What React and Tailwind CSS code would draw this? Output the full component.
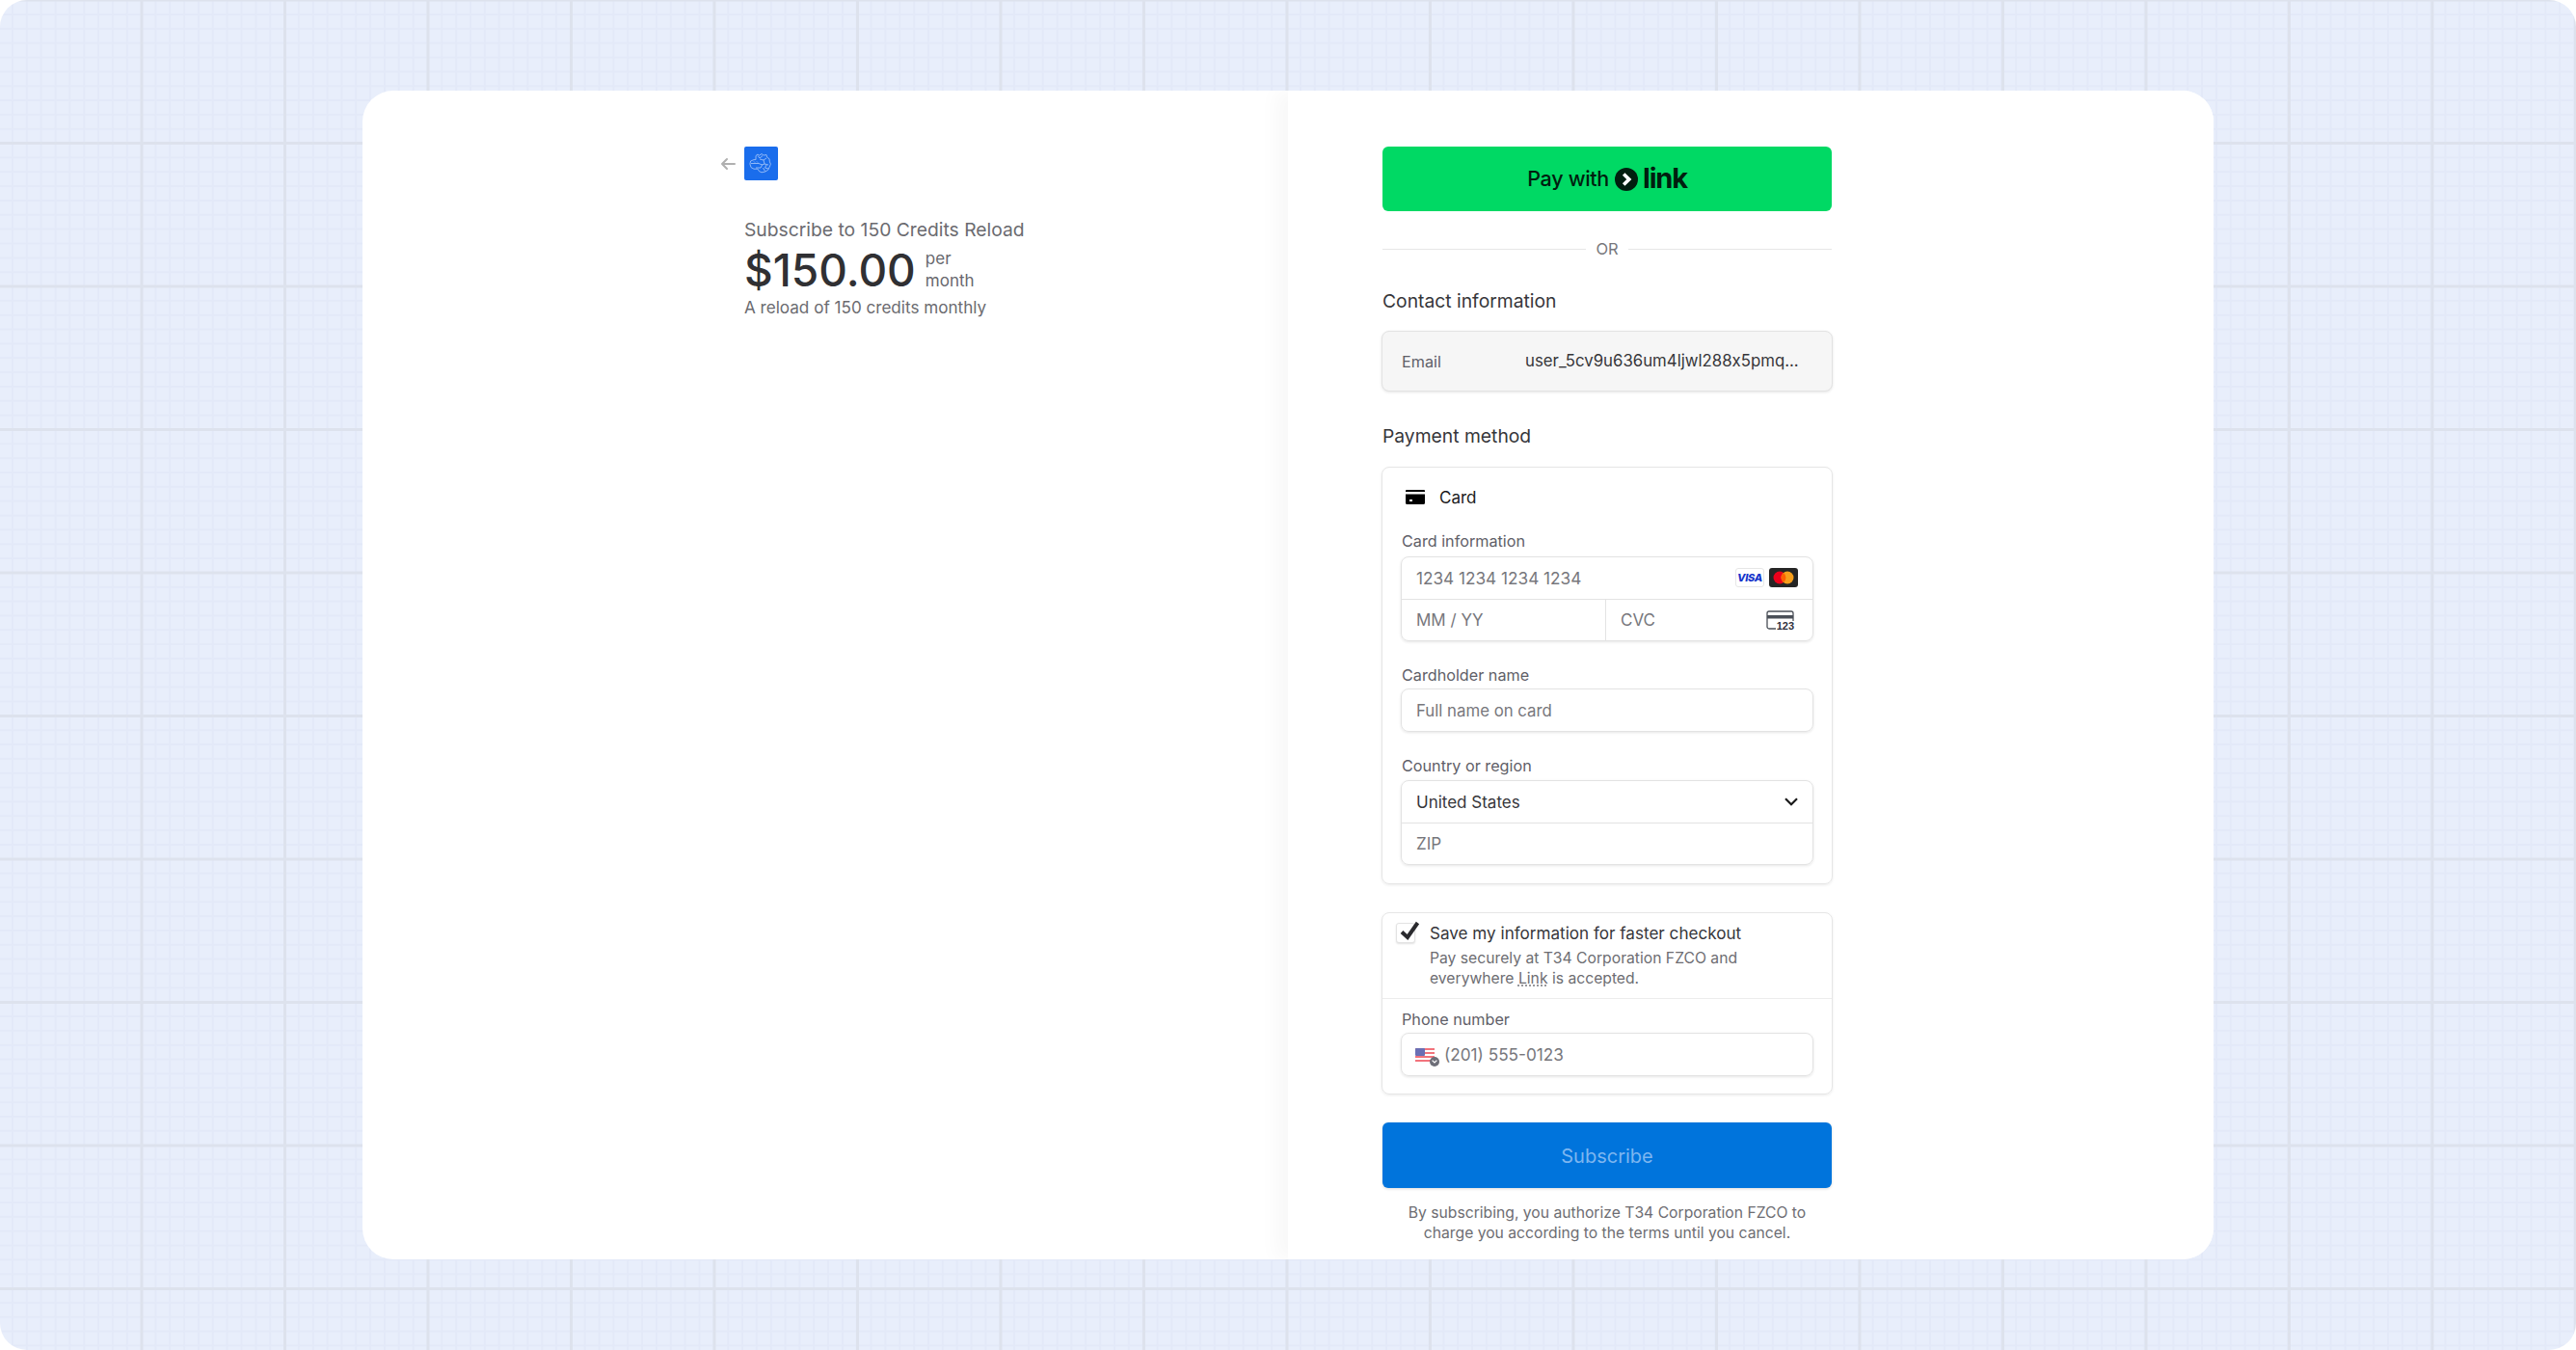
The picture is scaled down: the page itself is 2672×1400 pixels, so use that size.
import React from 'react';

function BackArrow() {
  return (
    <svg width="16" height="14" viewBox="0 0 16 14" fill="none" stroke="#b0b0b0" strokeWidth="2" strokeLinecap="round" strokeLinejoin="round">
      <path d="M15 7H2M7 2 2 7l5 5" />
    </svg>
  );
}

function Logo() {
  return (
    <div className="w-[35px] h-[35px] rounded-[2px] bg-[#1a6dec] flex items-center justify-center">
      <svg width="25" height="25" viewBox="0 0 25 25" fill="none" stroke="#9dbff7" strokeWidth="0.9" strokeLinejoin="round">
        <path d="M7 4.5 9 3l1.5 1.2L13 2.5l2 1.6 3-.6.6 2.6 2.4 1.6.4 3.2 1 2.2-1.2 3-1.4 3-3 1.9-3.8.8-2.6-1.2-1.4-2.4H5l-3-1.6L.9 13l.7-3 3.4-1.4L7 8.6z" />
        <path d="M2 12.5h8l3.5 1.5-1.5 3H7M11 8l4 1 3-2M15 9l1 4 4 1M16 13l-3 1M14.5 17l2 3.5M18 14l-1.5 3 3.5 1M9 4.5 11 7l3-2.5M5 10.5l1 1M8 10.5l1 1" />
      </svg>
    </div>
  );
}

function LinkMark() {
  return (
    <svg width="24" height="24" viewBox="0 0 24 24">
      <circle cx="12" cy="12" r="12" fill="#011e0f" />
      <path d="M9.2 6.5 14.8 12l-5.6 5.5" fill="none" stroke="#ffffff" strokeWidth="3.6" />
    </svg>
  );
}

function CardIcon() {
  return (
    <svg width="20" height="15" viewBox="0 0 20 15">
      <path d="M0 1.2C0 .5.5 0 1.2 0h17.6c.7 0 1.2.5 1.2 1.2V2H0zM0 4.5h20v9.3c0 .7-.5 1.2-1.2 1.2H1.2C.5 15 0 14.500 0 13.800z" fill="#000000" />
      <rect x="4" y="10" width="3" height="2" fill="#ffffff" />
    </svg>
  );
}

function Visa() {
  return (
    <div className="w-[30px] h-[20px] rounded-[3px] border border-[#e6e6e6] bg-white flex items-center justify-center">
      <span className="text-[11px] leading-none font-extrabold italic tracking-[-0.3px] text-[#1434cb]">VISA</span>
    </div>
  );
}

function Mastercard() {
  return (
    <div className="w-[30px] h-[20px] rounded-[3px] bg-[#252525] flex items-center justify-center">
      <svg width="22" height="14" viewBox="0 0 22 14">
        <circle cx="7" cy="7" r="6.5" fill="#eb001b" />
        <circle cx="15" cy="7" r="6.5" fill="#f79e1b" />
        <path d="M11 1.900a6.500 6.500 0 0 1 0 10.200 6.500 6.500 0 0 1 0-10.200z" fill="#ff5f00" />
      </svg>
    </div>
  );
}

function CvcIcon() {
  return (
    <div className="relative w-[29px] h-[20px]">
      <svg width="29" height="20" viewBox="0 0 29 20" fill="none">
        <path d="M15 19H3a2 2 0 0 1-2-2V3a2 2 0 0 1 2-2h23a2 2 0 0 1 2 2v9" stroke="#4a4f57" strokeWidth="1.300" />
        <rect x="1" y="5" width="27" height="3.500" fill="#4a4f57" />
      </svg>
      <span className="absolute right-0 bottom-[-2px] bg-white pl-px text-[11px] leading-none font-bold text-[#30313d] font-['Liberation_Sans',sans-serif]">123</span>
    </div>
  );
}

function Chevron() {
  return (
    <svg width="14" height="9" viewBox="0 0 14 9" fill="none" stroke="#1a1a1a" strokeWidth="2.200">
      <path d="M1 1.200 7 7.200l6-6" />
    </svg>
  );
}

function Flag() {
  return (
    <div className="relative w-[20px] h-[14px]">
      <svg width="20" height="14" viewBox="0 0 20 14">
        <rect width="20" height="14" rx="1.500" fill="#ffffff" />
        <path d="M0 1h20M0 5h20M0 9h20M0 13h20" stroke="#f2737c" strokeWidth="2" />
        <rect width="10" height="8" rx="1" fill="#6a6fb4" />
      </svg>
      <div className="absolute right-[-5px] bottom-[-5px] w-[10px] h-[10px] rounded-full bg-[#6d6e78] flex items-center justify-center">
        <svg width="6" height="4" viewBox="0 0 6 4" fill="none" stroke="#ffffff" strokeWidth="1.200">
          <path d="M.6.600 3 3 5.400.600" />
        </svg>
      </div>
    </div>
  );
}

function FieldLabel({ children }) {
  return <div className="h-[20px] leading-[20px] pt-px text-[16.200px] font-normal text-[#5f6068] ml-px">{children}</div>;
}

export default function App() {
  return (
    <div className="w-[2672px] h-[1400px] rounded-[28px] overflow-hidden flex items-center justify-center font-['Inter',sans-serif] bg-[#e8eefb] bg-[linear-gradient(to_right,#dde2ed_3px,transparent_3px),linear-gradient(to_bottom,#dde2ed_3px,transparent_3px),linear-gradient(to_right,#e3e9f8_2px,transparent_2px),linear-gradient(to_bottom,#e3e9f8_2px,transparent_2px)] bg-[size:148.5px_148.5px,148.5px_148.5px,14.85px_14.85px,14.85px_14.85px] bg-[position:145.5px_0,0_147px,12px_0,0_14px]">
      <div className="w-[1920px] h-[1212px] bg-white rounded-[32px] flex overflow-hidden">
        {/* Left: product summary */}
        <div className="w-[960px] shrink-0 pl-[371px] pt-[58px]">
          <div className="flex items-center gap-[9px] h-[35px]">
            <BackArrow />
            <Logo />
          </div>
          <div className="ml-[25px] mt-[37px]">
            <div className="h-[28px] leading-[28px] text-[19.300px] font-normal text-[#6b6b70]">Subscribe to 150 Credits Reload</div>
            <div className="flex items-center gap-[10px] h-[56px]">
              <span className="text-[46px] leading-none font-medium text-[#303033]">$150.00</span>
              <span className="text-[17px] leading-[23px] font-normal text-[#68686e]">per<br />month</span>
            </div>
            <div className="h-[24px] leading-[24px] text-[17.100px] font-normal text-[#6b6b70] -mt-[1px]">A reload of 150 credits monthly</div>
          </div>
        </div>

        {/* Right: checkout form */}
        <div className="relative w-[960px] shrink-0 pl-[97px] pt-[58px] bg-white shadow-[-12px_0_20px_rgba(0,0,0,0.03)]">
          <div className="w-[468px]">
            <div className="mx-px h-[67px] rounded-[6px] bg-[#00d964] flex items-center justify-center text-[#011e0f]">
              <span className="text-[21.500px] mr-[6px] font-medium tracking-[-0.3px]">Pay with</span>
              <LinkMark />
              <span className="text-[29px] font-bold leading-none tracking-[-1.200px] ml-[5px] pb-[3px]">link</span>
            </div>

            <div className="mx-px mt-[28px] h-[22px] flex items-center gap-[10px]">
              <div className="flex-1 h-px bg-[#e6e6e6]" />
              <span className="pt-px text-[16.500px] text-[#77777c]">OR</span>
              <div className="flex-1 h-px bg-[#e6e6e6]" />
            </div>

            <div className="mt-[29px] ml-px h-[28px] leading-[28px] text-[19.300px] font-normal text-[#36363a]">Contact information</div>
            <div className="mt-[17px] h-[63px] rounded-[8px] border border-[#e3e3e3] bg-[#f6f6f6] shadow-[0_1px_3px_rgba(0,0,0,0.1)] flex items-center pl-[20px] pr-[32px]">
              <span className="w-[128px] shrink-0 text-[16.200px] font-normal text-[#5f6068] pt-px">Email</span>
              <span className="text-[16.800px] text-[#36363a] whitespace-nowrap pt-px [font-feature-settings:'calt'_0]">user_5cv9u636um4ljwl288x5pmq...</span>
            </div>

            <div className="mt-[32px] ml-px h-[28px] leading-[28px] text-[19.300px] font-normal text-[#36363a]">Payment method</div>
            <div className="mt-[18px] rounded-[8px] border border-[#e6e6e6] shadow-[0_1px_3px_rgba(0,0,0,0.08)] px-[19px] pt-[19px] pb-[19px]">
              <div className="h-[22px] flex items-center pl-[5px]">
                <CardIcon />
                <span className="ml-[15px] text-[17px] font-normal text-[#1a1a1a] pt-[3px]">Card</span>
              </div>

              <div className="mt-[24px]"><FieldLabel>Card information</FieldLabel></div>
              <div className="mt-[7px] h-[88px] rounded-[8px] border border-[#e3e3e3] shadow-[0_1px_3px_rgba(0,0,0,0.1)] flex flex-col">
                <div className="flex-1 flex items-center justify-between pl-[15px] pr-[15px] border-b border-[#e3e3e3]">
                  <span className="text-[17.200px] text-[#77777c] pt-px">1234 1234 1234 1234</span>
                  <div className="flex items-center gap-[5px]">
                    <Visa />
                    <Mastercard />
                  </div>
                </div>
                <div className="flex-1 flex">
                  <div className="w-[212px] flex items-center pl-[15px] border-r border-[#e3e3e3]">
                    <span className="text-[17px] text-[#77777c] pt-[2px]">MM / YY</span>
                  </div>
                  <div className="flex-1 flex items-center justify-between pl-[15px] pr-[19px]">
                    <span className="text-[17px] text-[#77777c] pt-[2px]">CVC</span>
                    <CvcIcon />
                  </div>
                </div>
              </div>

              <div className="mt-[24px]"><FieldLabel>Cardholder name</FieldLabel></div>
              <div className="mt-[5px] h-[45px] rounded-[8px] border border-[#e3e3e3] shadow-[0_1px_3px_rgba(0,0,0,0.1)] flex items-center pl-[15px]">
                <span className="text-[16.800px] text-[#77777c] pt-[2px]">Full name on card</span>
              </div>

              <div className="mt-[24px]"><FieldLabel>Country or region</FieldLabel></div>
              <div className="mt-[6px] h-[88px] rounded-[8px] border border-[#e3e3e3] shadow-[0_1px_3px_rgba(0,0,0,0.1)] flex flex-col">
                <div className="flex-1 flex items-center justify-between pl-[15px] pr-[15px] border-b border-[#e3e3e3]">
                  <span className="text-[17px] text-[#36363a] pt-[2px]">United States</span>
                  <Chevron />
                </div>
                <div className="flex-1 flex items-center pl-[15px]">
                  <span className="text-[17px] text-[#77777c] pt-[2px]">ZIP</span>
                </div>
              </div>
            </div>

            <div className="mt-[29px] rounded-[8px] border border-[#e6e6e6] shadow-[0_1px_3px_rgba(0,0,0,0.08)]">
              <div className="h-[89px] border-b border-[#ececec] relative pl-[49px] pt-[10px]">
                <div className="absolute left-[14px] top-[10px] w-[20px] h-[21px] rounded-[3px] border border-[#e3e3e3] bg-white shadow-[0_1px_2px_rgba(0,0,0,0.12)]" />
                <svg className="absolute left-[18px] top-[8px]" width="21" height="20" viewBox="0 0 21 20" fill="none" stroke="#2a2a2e" strokeWidth="4">
                  <path d="M2 11.500 8 17 18.500 2" />
                </svg>
                <div className="h-[22px] leading-[22px] text-[17.100px] font-normal text-[#36363a]">Save my information for faster checkout</div>
                <div className="mt-[4px] text-[15.700px] leading-[21px] text-[#6d6d72]">
                  Pay securely at T34 Corporation FZCO and<br />
                  everywhere <span className="underline decoration-dotted decoration-[#77777c] underline-offset-2">Link</span> is accepted.
                </div>
              </div>
              <div className="px-[19px] pb-[18px] pt-[10px]">
                <FieldLabel>Phone number</FieldLabel>
                <div className="mt-[5px] h-[45px] rounded-[8px] border border-[#e3e3e3] shadow-[0_1px_3px_rgba(0,0,0,0.1)] flex items-center pl-[14px]">
                  <Flag />
                  <span className="ml-[10px] text-[17.200px] text-[#77777c] pt-px">(201) 555-0123</span>
                </div>
              </div>
            </div>

            <div className="mx-px mt-[29px] h-[68px] rounded-[6px] bg-[#0074dc] shadow-[0_1px_3px_rgba(0,0,0,0.15)] flex items-center justify-center">
              <span className="text-[20px] font-normal text-[#7db6f0] pt-px">Subscribe</span>
            </div>
            <div className="mt-[15px] text-center text-[15.700px] leading-[21px] text-[#6d6d72]">
              By subscribing, you authorize T34 Corporation FZCO to<br />
              charge you according to the terms until you cancel.
            </div>
          </div>
        </div>
      </div>
    </div>
  );
}
